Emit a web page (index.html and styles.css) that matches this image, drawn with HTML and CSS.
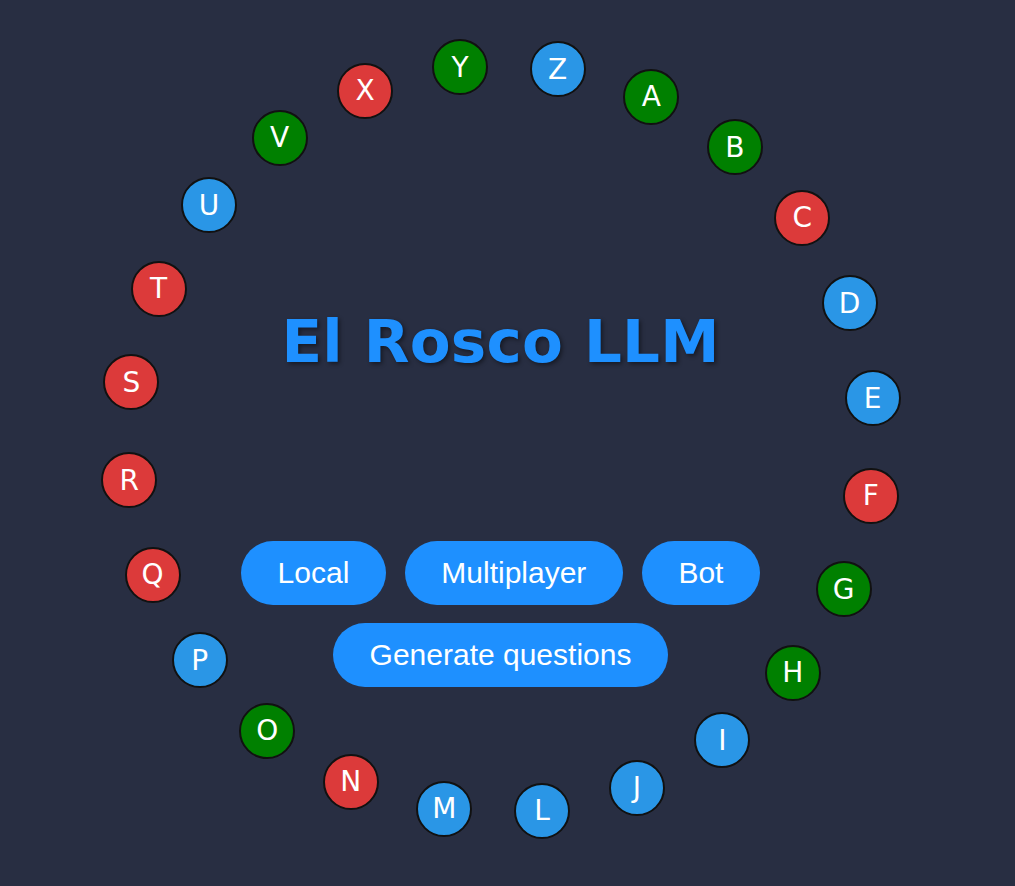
FILE: index.html
```html
<!DOCTYPE html>
<html lang="es">
<head>
<meta charset="UTF-8" />
<meta name="viewport" content="width=device-width, initial-scale=1.0" />
<title>El Rosco LLM</title>
<link rel="stylesheet" href="styles.css">
</head>
<body>
  <div class="stage" id="stage">
    <h1 class="title">El Rosco LLM</h1>

    <div class="menu">
      <div class="menu-row">
        <button class="btn">Local</button>
        <button class="btn">Multiplayer</button>
        <button class="btn">Bot</button>
      </div>
      <div class="menu-row">
        <button class="btn">Generate questions</button>
      </div>
    </div>

    <div class="rosco" id="rosco"></div>
  </div>

<script src="rosco.js"></script>
</body>
</html>
```

FILE: styles.css
```css
* { box-sizing: border-box; }

body {
  margin: 0;
  background: #282e42;
  color: #fff;
  font-family: 'DejaVu Sans', Verdana, sans-serif;
  overflow: hidden;
}

.stage {
  position: relative;
  width: 1001px;
  height: 886px;
  padding-top: 307px;
  display: flex;
  flex-direction: column;
  align-items: center;
}

.title {
  margin: 0;
  font-family: 'DejaVu Sans', Verdana, sans-serif;
  font-weight: bold;
  font-size: 59.5px;
  letter-spacing: 0.2px;
  color: #1e90ff;
  text-shadow: 2px 2px 4px rgba(0, 0, 0, 0.45);
}

.menu {
  margin-top: 165px;
  display: flex;
  flex-direction: column;
  align-items: center;
  gap: 18px;
}

.menu-row {
  display: flex;
  gap: 19px;
}

.btn {
  font-family: 'Liberation Sans', Arial, sans-serif;
  font-size: 30px;
  color: #fff;
  background: #1e90ff;
  border: none;
  border-radius: 32px;
  height: 64px;
  padding: 0 36.5px;
  cursor: pointer;
}
.btn:hover { opacity: 0.9; }

/* letters around the ring */
.rosco {
  position: absolute;
  left: 0;
  top: 0;
  width: 100%;
  height: 100%;
  pointer-events: none;
}

.letter {
  position: absolute;
  width: 56px;
  height: 56px;
  margin: -28px 0 0 -28px;
  border-radius: 50%;
  border: 2px solid #111;
  display: flex;
  align-items: center;
  justify-content: center;
  font-size: 28px;
  color: #fff;
}
.letter.pending { background: #2a96e6; }
.letter.correct { background: #008000; }
.letter.wrong { background: #dc3a3a; }
```

FILE: rosco.js
```js
const rosco = document.getElementById("rosco");

// status of each letter: p = pending, c = correct, w = wrong
const letters = [
  ["A","c"],["B","c"],["C","w"],["D","p"],["E","p"],["F","w"],
  ["G","c"],["H","c"],["I","p"],["J","p"],["L","p"],["M","p"],
  ["N","w"],["O","c"],["P","p"],["Q","w"],["R","w"],["S","w"],
  ["T","w"],["U","p"],["V","c"],["X","w"],["Y","c"],["Z","p"]
];
const names = { p: "pending", c: "correct", w: "wrong" };

const cx = 501, cy = 439, radius = 374;
const start = 23.7;

letters.forEach(([ch, st], i) => {
  const angle = (start + i * 360 / letters.length) * Math.PI / 180;
  const el = document.createElement("div");
  el.className = "letter " + names[st];
  el.textContent = ch;
  el.style.left = (cx + radius * Math.sin(angle)).toFixed(1) + "px";
  el.style.top = (cy - radius * Math.cos(angle)).toFixed(1) + "px";
  rosco.appendChild(el);
});
```
